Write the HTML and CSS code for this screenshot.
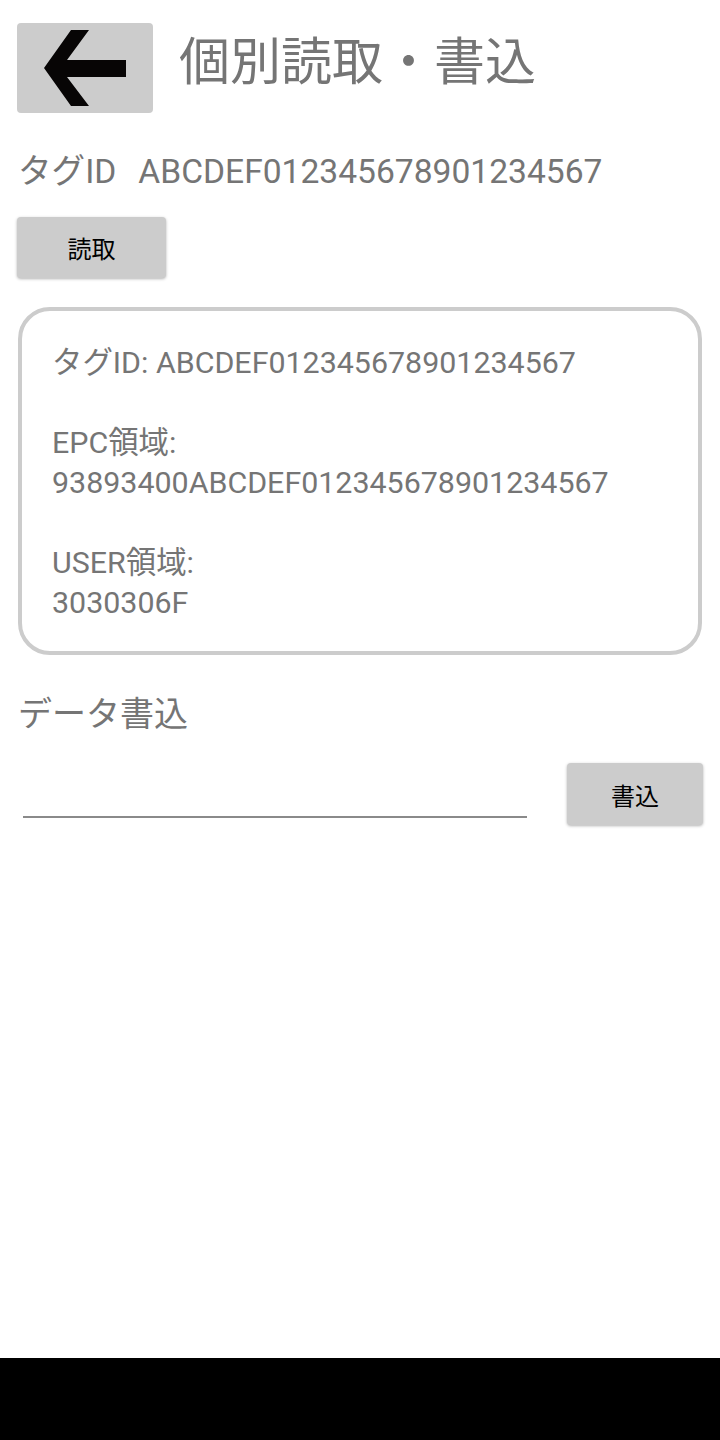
FILE: index.html
```html
<!DOCTYPE html>
<html lang="ja">
<head>
<meta charset="UTF-8">
<meta name="viewport" content="width=device-width, initial-scale=1.0">
<title>個別読取・書込</title>
<link rel="stylesheet" href="styles.css">
</head>

<body>
    <div class="screen">
        <div class="header">
            <button class="back-btn" aria-label="戻る">
                <svg width="136" height="90" viewBox="0 0 136 90">
                    <polygon points="54,7 72,7 50,37 109,37 109,54 50,54 72,83 54,83 27,45" fill="#070505"/>
                </svg>
            </button>
            <h1 class="title">個別読取・書込</h1>
        </div>

        <div class="tag-row">
            <span>タグID</span>
            <span>ABCDEF012345678901234567</span>
        </div>

        <button class="btn read-btn">読取</button>

        <div class="result">
            <div>タグID: ABCDEF012345678901234567</div>
            <div class="blank"></div>
            <div>EPC領域:</div>
            <div>93893400ABCDEF012345678901234567</div>
            <div class="blank"></div>
            <div>USER領域:</div>
            <div>3030306F</div>
        </div>

        <h2 class="section">データ書込</h2>

        <div class="write-row">
            <input type="text" class="data-input">
            <button class="btn write-btn">書込</button>
        </div>
    </div>
    <div class="navbar"></div>
</body>
</html>
```

FILE: styles.css
```css
html, body {
    margin: 0;
    padding: 0;
}
body {
    font-family: Roboto, "Noto Sans CJK JP", sans-serif;
    color: #757575;
    background-color: #fff;
    height: 1440px;
    display: flex;
    flex-direction: column;
}
.screen {
    flex: 1;
    padding: 0 17px 0 17px;
}
.header {
    display: flex;
    align-items: center;
    padding-top: 23px;
}
.back-btn {
    width: 136px;
    height: 90px;
    padding: 0;
    border: none;
    border-radius: 4px;
    background-color: #cccccc;
    display: block;
}
.back-btn svg {
    display: block;
}
.title {
    margin: 0 0 10px 26px;
    font-size: 51px;
    font-weight: normal;
    line-height: 60px;
    color: #757575;
}
.tag-row {
    margin-top: 39px;
    display: flex;
    gap: 22px;
    font-size: 33.6px;
    line-height: 40px;
    padding-left: 1px;
}
.btn {
    border: none;
    border-radius: 4px;
    background-color: #cccccc;
    color: #000;
    font-family: Roboto, "Noto Sans CJK JP", sans-serif;
    font-size: 24px;
    box-shadow: 0 1px 3px rgba(0, 0, 0, 0.3);
    padding: 0;
}
.read-btn {
    display: block;
    margin-top: 25px;
    width: 149px;
    height: 61px;
}
.result {
    margin: 29px 1px 0 1px;
    border: 4px solid #cccccc;
    border-radius: 32px;
    padding: 32px 30px 28px 30px;
    font-size: 30.4px;
    line-height: 40px;
}
.result .blank {
    height: 40px;
}
.section {
    margin: 39px 0 0 1px;
    font-size: 34px;
    font-weight: normal;
    line-height: 40px;
    color: #757575;
}
.write-row {
    margin-top: 29px;
    display: flex;
    align-items: flex-start;
    gap: 40px;
}
.data-input {
    flex: 1;
    margin-left: 6px;
    height: 53px;
    border: none;
    border-bottom: 2px solid #8a8a8a;
    outline: none;
    padding: 0;
    font-size: 30px;
    background: transparent;
}
.write-btn {
    width: 136px;
    height: 62px;
    flex-shrink: 0;
}
.navbar {
    height: 82px;
    background-color: #000;
}
```
